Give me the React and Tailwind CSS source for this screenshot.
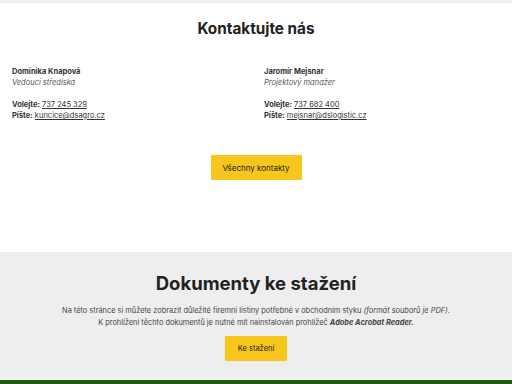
export default function App() {
  const font = { fontFamily: "Inter, 'Open Sans', sans-serif" };
  return (
    <div className="w-[512px] h-[384px] overflow-hidden bg-white text-[#222]" style={font}>
      <div className="h-[3px] bg-[#eeeeee]" />
      <section className="flex flex-col items-center pt-[18px] h-[249px]">
        <h2 className="text-[15.3px] leading-[16px] font-bold text-[#222]">Kontaktujte nás</h2>
        <div className="w-full grid grid-cols-2 mt-[29px] pl-[12px] text-[7.5px] leading-[11px] text-[#333]">
          <div>
            <div className="font-bold">Dominika Knapová</div>
            <div className="italic text-[#555]">Vedoucí střediska</div>
            <div className="h-[11px]" />
            <div><span className="font-bold">Volejte:</span> <span className="underline">737 245 329</span></div>
            <div><span className="font-bold">Píšte:</span> <span className="underline">kuncice@dsagro.cz</span></div>
          </div>
          <div className="pl-[2px]">
            <div className="font-bold">Jaromír Mejsnar</div>
            <div className="italic text-[#555]">Projektový manažer</div>
            <div className="h-[11px]" />
            <div><span className="font-bold">Volejte:</span> <span className="underline">737 682 400</span></div>
            <div><span className="font-bold">Píšte:</span> <span className="underline">mejsnar@dslogistic.cz</span></div>
          </div>
        </div>
        <div className="mt-[34px] w-[91px] h-[25px] bg-[#f6c61c] flex items-center justify-center text-[8px] text-[#222]">Všechny kontakty</div>
      </section>
      <section className="bg-[#eeeeee] h-[127px] flex flex-col items-center pt-[21px]">
        <h2 className="text-[18.5px] leading-[20px] font-bold text-[#222]">Dokumenty ke stažení</h2>
        <p className="mt-[12px] text-[7.4px] leading-[12px] text-[#444] text-center">
          Na této stránce si můžete zobrazit důležité firemní listiny potřebné v obchodním styku <i>(formát souborů je PDF)</i>.<br />
          K prohlížení těchto dokumentů je nutné mít nainstalován prohlížeč <b><i>Adobe Acrobat Reader.</i></b>
        </p>
        <div className="mt-[7px] w-[62px] h-[25px] bg-[#f6c61c] flex items-center justify-center text-[7.5px] text-[#222]">Ke stažení</div>
      </section>
      <div className="h-[1px] bg-white" />
      <div className="h-[4px] bg-[#1d5c0e]" />
    </div>
  );
}
